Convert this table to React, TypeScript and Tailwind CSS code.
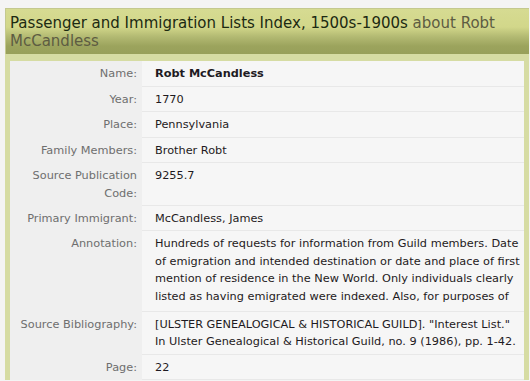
const rows: { label: string; value: string; bold?: boolean; pad?: string }[] = [
  { label: "Name:", value: "Robt McCandless", bold: true },
  { label: "Year:", value: "1770" },
  { label: "Place:", value: "Pennsylvania" },
  { label: "Family Members:", value: "Brother Robt" },
  { label: "Source Publication Code:", value: "9255.7", pad: "pb-[5px]" },
  { label: "Primary Immigrant:", value: "McCandless, James" },
  {
    label: "Annotation:",
    value:
      "Hundreds of requests for information from Guild members. Date of emigration and intended destination or date and place of first mention of residence in the New World. Only individuals clearly listed as having emigrated were indexed. Also, for purposes of",
    pad: "pb-[5px]",
  },
  {
    label: "Source Bibliography:",
    value:
      '[ULSTER GENEALOGICAL & HISTORICAL GUILD]. "Interest List." In\u00a0Ulster Genealogical & Historical Guild, no. 9 (1986), pp. 1-42.',
  },
  { label: "Page:", value: "22" },
];

export default function App() {
  return (
    <div className="h-[381px] overflow-hidden bg-[#f4f4f4] pl-[5px] pr-[1px] pt-2 font-['DejaVu_Sans',Verdana,sans-serif]">
      <div className="border-l border-t border-[#c4c98f] bg-[linear-gradient(to_bottom,#d6db92_0%,#d2d78a_40%,#b2b972_62%,#9ca45d_82%,#98a05a_100%)] px-[4px] pb-[4px] pt-[5px] text-[15px] leading-[18px] text-[#1c2a12]">
        Passenger and Immigration Lists Index, 1500s-1900s{" "}
        <span className="text-[#5d5c42]">about Robt McCandless</span>
      </div>

      <div className="bg-[#d6dca3] px-[5px] pt-[7px]">
        <div className="text-[11.3px] leading-[17.6px]">
          {rows.map((row) => (
            <div key={row.label} className="flex">
              <div className="w-[132px] shrink-0 bg-[#efefef] pb-[3px] pl-2 pr-[5px] pt-1 text-right text-[#6e6e6e]">
                {row.label}
              </div>
              <div
                className={
                  "flex-1 border-b border-[#e8e8e8] bg-[#f6f6f6] pl-[13px] pr-[2px] pt-1 text-[#1e1a22] " +
                  (row.pad ?? "pb-[3px]")
                }
              >
                {row.bold ? <b>{row.value}</b> : row.value}
              </div>
            </div>
          ))}
        </div>
      </div>
    </div>
  );
}
